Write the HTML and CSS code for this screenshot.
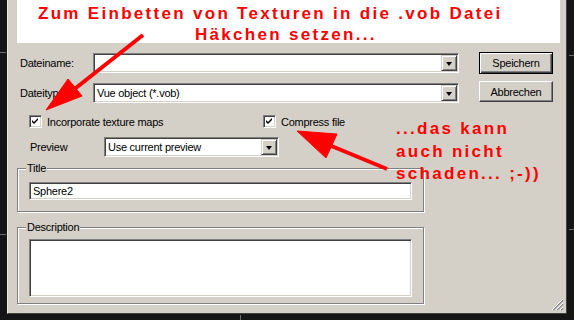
FILE: index.html
```html
<!DOCTYPE html>
<html lang="de">
<head>
    <meta charset="UTF-8">
    <title>Vue - Objekt speichern</title>
    <link rel="stylesheet" href="styles.css">
</head>
<body>
    <div class="dialog">
        <div class="banner">
            <div class="line-1">Zum Einbetten von Texturen in die .vob Datei</div>
            <div class="line-2">Häkchen setzen...</div>
        </div>

        <div class="top">
            <div class="fields">
                <div class="field-row first">
                    <label>Dateiname:</label>
                    <div class="combo edit wide">
                        <span class="combo-text"></span>
                        <span class="drop"><span class="tri"></span></span>
                    </div>
                </div>
                <div class="field-row second">
                    <label>Dateityp:</label>
                    <div class="combo edit wide">
                        <span class="combo-text">Vue object (*.vob)</span>
                        <span class="drop"><span class="tri"></span></span>
                    </div>
                </div>
            </div>
            <div class="actions">
                <button class="btn default">Speichern</button>
                <button class="btn cancel">Abbrechen</button>
            </div>
        </div>

        <div class="checks">
            <div class="check-item first">
                <span class="box"><svg width="7" height="7" viewBox="0 0 7 7"><path d="M0 2 L2 4 L6 0 L6 2 L2 6 L0 4 Z" fill="#000"/></svg></span>
                <span>Incorporate texture maps</span>
            </div>
            <div class="check-item">
                <span class="box"><svg width="7" height="7" viewBox="0 0 7 7"><path d="M0 2 L2 4 L6 0 L6 2 L2 6 L0 4 Z" fill="#000"/></svg></span>
                <span>Compress file</span>
            </div>
        </div>

        <div class="preview-row">
            <label>Preview</label>
            <div class="combo edit small">
                <span class="combo-text">Use current preview</span>
                <span class="drop"><span class="tri"></span></span>
            </div>
        </div>

        <fieldset class="group title-group">
            <legend>Title</legend>
            <div class="edit title-input">Sphere2</div>
        </fieldset>

        <fieldset class="group desc-group">
            <legend>Description</legend>
            <div class="edit desc-input"></div>
        </fieldset>

        <svg class="grip" width="12" height="12" viewBox="0 0 12 12">
            <path d="M11 1 L1 11 M11 5 L5 11 M11 9 L9 11" stroke="#808080" stroke-width="1.4"/>
            <path d="M11 0 L0 11 M11 4 L4 11 M11 8 L8 11" stroke="#fff" stroke-width="1"/>
        </svg>
    </div>

    <!-- red annotations pasted over the screenshot -->
    <div class="note">...das kann<br>auch nicht<br>schaden... ;-))</div>

    <svg class="overlay" width="574" height="320" viewBox="0 0 574 320">
        <g stroke="#6e6e6e" stroke-width="1">
            <line x1="0" y1="52.5" x2="6" y2="52.5"/>
            <line x1="0" y1="234.5" x2="6" y2="234.5"/>
            <line x1="569" y1="55.5" x2="574" y2="55.5"/>
            <line x1="569" y1="229.5" x2="574" y2="229.5"/>
            <line x1="240.5" y1="315" x2="240.5" y2="320"/>
        </g>
        <g fill="#ff0000" stroke="#ff0000">
            <line x1="143" y1="35" x2="72" y2="91" stroke-width="4"/>
            <polygon points="46,110 82,96 68,79" stroke-width="1"/>
            <line x1="387" y1="169" x2="329" y2="145" stroke-width="4"/>
            <polygon points="297,131 337,134 326,158" stroke-width="1"/>
        </g>
    </svg>
</body>
</html>
```

FILE: styles.css
```css
body {
    margin: 0;
    width: 574px;
    height: 320px;
    overflow: hidden;
    position: relative;
    background-color: #151515;
    font-family: "Liberation Sans", Arial, sans-serif;
    font-size: 11px;
    letter-spacing: -0.25px;
    color: #000;
}

.dialog {
    margin-left: 7px;
    width: 560px;
    height: 314px;
    box-sizing: border-box;
    background-color: #d4d0c8;
    border-left: 1px solid #ecebe6;
    border-right: 1px solid #404040;
    border-bottom: 1px solid #404040;
    position: relative;
}

.banner {
    margin-left: 9px;
    width: 543px;
    height: 43px;
    box-sizing: border-box;
    padding-top: 3px;
    background-color: #fff;
    color: #ff0000;
    font-weight: bold;
    font-size: 17px;
    line-height: 21px;
    letter-spacing: 2.3px;
    white-space: nowrap;
}

.line-1 {
    padding-left: 21px;
}

.line-2 {
    padding-left: 178px;
}

/* file name / type rows */
.top {
    display: flex;
    margin-top: 9px;
    padding-left: 12px;
}

.fields {
    display: flex;
    flex-direction: column;
}

.field-row {
    display: flex;
    align-items: center;
}

.field-row.first {
    margin-top: 1px;
}

.field-row.second {
    margin-top: 10px;
}

.field-row label {
    width: 73px;
}

.edit {
    background-color: #fff;
    box-sizing: border-box;
    border: 1px solid;
    border-color: #808080 #fff #fff #808080;
    box-shadow: inset 1px 1px #404040, inset -1px -1px #d4d0c8;
}

.combo {
    height: 20px;
    display: flex;
    align-items: center;
    justify-content: space-between;
}

.combo.wide {
    width: 366px;
}

.combo.small {
    width: 175px;
}

.combo-text {
    padding-left: 3px;
}

.drop {
    width: 16px;
    height: 16px;
    margin-right: 1px;
    box-sizing: border-box;
    background-color: #d4d0c8;
    border: 1px solid;
    border-color: #d4d0c8 #404040 #404040 #d4d0c8;
    box-shadow: inset 1px 1px #fff, inset -1px -1px #808080;
    display: flex;
    align-items: center;
    justify-content: center;
}

.tri {
    width: 0;
    height: 0;
    border-left: 3.5px solid transparent;
    border-right: 3.5px solid transparent;
    border-top: 4px solid #000;
    margin-top: 1px;
}

.actions {
    display: flex;
    flex-direction: column;
    gap: 7px;
    margin-left: 20px;
}

.btn {
    width: 74px;
    height: 21px;
    padding: 0;
    background-color: #d4d0c8;
    border: 1px solid;
    border-color: #fff #404040 #404040 #fff;
    box-shadow: inset -1px -1px #808080;
    font-family: "Liberation Sans", Arial, sans-serif;
    font-size: 11px;
    letter-spacing: -0.25px;
    color: #000;
}

.btn.default {
    height: 22px;
    border-color: #000;
    box-shadow: inset 1px 1px #fff, inset -1px -1px #404040, inset -2px -2px #808080;
}

/* checkboxes */
.checks {
    display: flex;
    margin-top: 12px;
    padding-left: 21px;
    height: 13px;
}

.check-item {
    display: flex;
    align-items: center;
    gap: 5px;
}

.check-item.first {
    width: 234px;
}

.box {
    width: 13px;
    height: 13px;
    box-sizing: border-box;
    background-color: #fff;
    border: 1px solid;
    border-color: #808080 #fff #fff #808080;
    box-shadow: inset 1px 1px #404040, inset -1px -1px #d4d0c8;
    display: flex;
    align-items: center;
    justify-content: center;
}

.preview-row {
    display: flex;
    align-items: center;
    margin-top: 9px;
    padding-left: 22px;
}

.preview-row label {
    width: 74px;
}

/* group boxes */
.group {
    margin: 0 0 0 9px;
    width: 407px;
    box-sizing: border-box;
    border: 1px solid #808080;
    box-shadow: inset 1px 1px #fff, 1px 1px 0 #fff;
    padding: 7px 11px 11px 11px;
    min-width: 0;
}

.group legend {
    padding: 0 1px;
    margin-left: -3px;
    line-height: 13px;
    background-color: #d4d0c8;
}

.title-group {
    margin-top: 5px;
}

.desc-group {
    margin-top: 9px;
    padding-top: 5px;
    padding-bottom: 6px;
}

.title-input {
    height: 18px;
    line-height: 16px;
    padding-left: 3px;
}

.desc-input {
    height: 58px;
}

.grip {
    position: absolute;
    right: 2px;
    bottom: 2px;
}

.note {
    position: absolute;
    left: 396px;
    top: 118px;
    color: #ff0000;
    font-weight: bold;
    font-size: 17px;
    line-height: 22.5px;
    letter-spacing: 2.3px;
    white-space: nowrap;
}

.overlay {
    position: absolute;
    left: 0;
    top: 0;
    pointer-events: none;
}
```
